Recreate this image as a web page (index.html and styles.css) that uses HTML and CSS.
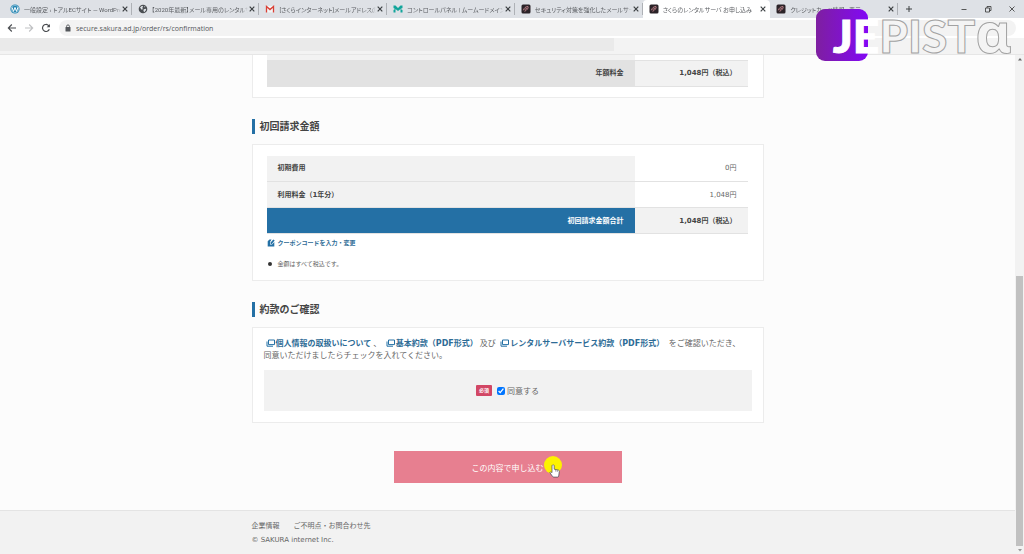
FILE: index.html
```html
<!DOCTYPE html>
<html lang="ja">
  <head>
    <meta charset="utf-8">
    <title>さくらのレンタルサーバ お申し込み</title>
    <link rel="stylesheet" href="styles.css">
  </head>
  <body>
    <svg class="symbols" aria-hidden="true">
      <symbol id="close" viewBox="0 0 8 8">
        <path d="M1.700 1.700l4.600 4.600M6.300 1.700l-4.600 4.600" stroke="#3c4043" stroke-width="1.200" />
      </symbol>
      <symbol id="sakura" viewBox="0 0 10 10">
        <rect x="0.500" y="0.500" width="9" height="9" rx="1.500" fill="#2b2328" />
        <path d="M2.400 6.300C3 4 4.500 2.600 7 2.500 7.800 4 6 6 3.600 7.400M3.500 5.800l2.700-2" fill="none" stroke="#b97f86" stroke-width="1" />
      </symbol>
      <symbol id="window" viewBox="0 0 9 8">
        <path d="M2.500 1h6v4.600h-6z" fill="#fff" stroke="#2470a5" stroke-width="1" />
        <path d="M1 2.500V7.200h6" fill="none" stroke="#2470a5" stroke-width="1" />
      </symbol>
    </svg>

    <header class="browser">
      <div class="tab-bar">
        <nav class="tabs">
          <div class="tab">
            <svg class="favicon" viewBox="0 0 10 10">
              <circle cx="5" cy="5" r="4.600" fill="#2585b2" />
              <circle cx="5" cy="5" r="3.700" fill="none" stroke="#d6eaf3" stroke-width="0.500" />
              <path d="M2 3.400l1.500 4L5 3.400l1.500 4L8 3.200" fill="none" stroke="#fff" stroke-width="1" />
            </svg>
            <span class="tab-title">一般設定 ‹ トアルECサイト — WordPress</span>
            <button class="tab-close" aria-label="閉じる"><svg><use href="#close" /></svg></button>
          </div>
          <div class="tab">
            <svg class="favicon" viewBox="0 0 10 10">
              <circle cx="5" cy="5" r="4.300" fill="#4a4e52" />
              <path d="M2 3.500l2-1.700 1.200.8-1 1.400.8 1-1.300.8zM5.700 5.200l2.200-.5.3 1.300-2 2.200-.8-1.400zM6.400 1.800l1 1-.9.7z" fill="#dee1e6" />
            </svg>
            <span class="tab-title">【2020年最新】メール専用のレンタルサーバー</span>
            <button class="tab-close" aria-label="閉じる"><svg><use href="#close" /></svg></button>
          </div>
          <div class="tab">
            <svg class="favicon" viewBox="0 0 10 10">
              <path d="M1 2h8v6.400H1z" fill="#f4f4f4" />
              <path d="M1.500 8.400V2.500L5 5.600l3.500-3.100v5.900" fill="none" stroke="#d93f35" stroke-width="1.300" />
            </svg>
            <span class="tab-title">[さくらインターネット]メールアドレスの旧</span>
            <button class="tab-close" aria-label="閉じる"><svg><use href="#close" /></svg></button>
          </div>
          <div class="tab">
            <svg class="favicon" viewBox="0 0 10 10">
              <path d="M.5 1.500h2L5 4l2.500-2.500h2v2.500L7.500 5l2 1v2.500h-2V5L5 7 2.500 5v3.500h-2V6l1.500-1-1.500-1z" fill="#12a59b" />
            </svg>
            <span class="tab-title">コントロールパネル | ムームードメイン</span>
            <button class="tab-close" aria-label="閉じる"><svg><use href="#close" /></svg></button>
          </div>
          <div class="tab">
            <svg class="favicon"><use href="#sakura" /></svg>
            <span class="tab-title">セキュリティ対策を強化したメールサーバー</span>
            <button class="tab-close" aria-label="閉じる"><svg><use href="#close" /></svg></button>
          </div>
          <div class="tab active">
            <svg class="favicon"><use href="#sakura" /></svg>
            <span class="tab-title">さくらのレンタルサーバ お申し込み</span>
            <button class="tab-close" aria-label="閉じる"><svg><use href="#close" /></svg></button>
          </div>
          <div class="tab">
            <svg class="favicon"><use href="#sakura" /></svg>
            <span class="tab-title">クレジットカード情報 - 表示</span>
            <button class="tab-close" aria-label="閉じる"><svg><use href="#close" /></svg></button>
          </div>
        </nav>
        <button class="new-tab" aria-label="新しいタブ">
          <svg viewBox="0 0 8 8"><path d="M4 1v6M1 4h6" stroke="#3c4043" stroke-width="1" /></svg>
        </button>
        <div class="window-buttons">
          <button aria-label="最小化"><svg viewBox="0 0 8 8"><path d="M1.500 4.500h5" stroke="#333" stroke-width="0.800" /></svg></button>
          <button aria-label="元に戻す"><svg viewBox="0 0 8 8"><path d="M1.500 3h4v4h-4zM3 3V1.500h4v4H5.500" fill="none" stroke="#333" stroke-width="0.800" /></svg></button>
          <button aria-label="ウィンドウを閉じる"><svg viewBox="0 0 8 8"><path d="M1.500 1.500l5 5M6.500 1.500l-5 5" stroke="#333" stroke-width="0.800" /></svg></button>
        </div>
      </div>

      <div class="toolbar">
        <button aria-label="戻る"><svg viewBox="0 0 10 10"><path d="M9 5H1.500M4.800 1.500L1.300 5l3.500 3.500" fill="none" stroke="#4a4d51" stroke-width="1.100" /></svg></button>
        <button aria-label="進む"><svg viewBox="0 0 10 10"><path d="M1 5h7.500M5.200 1.500L8.700 5 5.200 8.500" fill="none" stroke="#bfc1c3" stroke-width="1.100" /></svg></button>
        <button aria-label="再読み込み"><svg viewBox="0 0 10 10"><path d="M8.300 6.200A3.500 3.500 0 1 1 7.500 2.500L8.500 3.500" fill="none" stroke="#4a4d51" stroke-width="1.200" /><path d="M8.900 1v3.200H5.700z" fill="#4a4d51" /></svg></button>
        <div class="address">
          <svg viewBox="0 0 6 8"><rect x="0.500" y="3" width="5" height="4.500" rx="0.500" fill="#55585c" /><path d="M1.600 3.200V2.300a1.400 1.400 0 0 1 2.800 0v.9" fill="none" stroke="#55585c" stroke-width="0.900" /></svg>
          <input type="text" value="secure.sakura.ad.jp/order/rs/confirmation" aria-label="アドレス">
        </div>
      </div>
      <div class="bookmarks"><div class="bookmarks-items"></div></div>

      <!-- channel logo, sits over the browser frame -->
      <svg class="watermark" viewBox="0 0 200 56" role="img" aria-label="JEPISTA">
        <defs>
          <linearGradient id="purple" x1="0" y1="0" x2="1" y2="0">
            <stop offset="0" stop-color="#7e1fa0" />
            <stop offset="1" stop-color="#8208f5" />
          </linearGradient>
        </defs>
        <rect x="0" y="1" width="52" height="52" rx="9" fill="url(#purple)" />
        <text class="logo-letters" x="17" y="45"><tspan class="solid">JE</tspan>PIST<tspan class="alpha">ɑ</tspan></text>
      </svg>
    </header>

    <div class="viewport">
      <div class="page">
        <main class="content">
          <section class="card card-cut">
            <table class="prices">
              <tr class="sliver">
                <th></th>
                <td></td>
              </tr>
              <tr class="subtotal">
                <th>年額料金</th>
                <td>1,048円（税込）</td>
              </tr>
            </table>
          </section>

          <h2>初回請求金額</h2>
          <section class="card">
            <table class="prices">
              <tr>
                <th>初期費用</th>
                <td>0円</td>
              </tr>
              <tr>
                <th>利用料金（1年分）</th>
                <td>1,048円</td>
              </tr>
              <tr class="total">
                <th>初回請求金額合計</th>
                <td>1,048円（税込）</td>
              </tr>
            </table>
            <a class="coupon" href="#">
              <svg viewBox="0 0 8 8"><path d="M2.500.5h2L3 3v2.500h2L7.300 3v4.500H.7V2.300z" fill="#2470a5" /><path d="M3.600 4.900V3.400L6.300.4l1.400 1.200-2.900 3.300z" fill="#2470a5" /></svg>
              クーポンコードを入力・変更
            </a>
            <ul class="notes">
              <li>金額はすべて税込です。</li>
            </ul>
          </section>

          <h2>約款のご確認</h2>
          <section class="card card-terms">
            <p class="terms">
              <a href="#"><svg><use href="#window" /></svg>個人情報の取扱いについて</a>、
              <a href="#"><svg><use href="#window" /></svg>基本約款（PDF形式）</a>及び
              <a href="#"><svg><use href="#window" /></svg>レンタルサーバサービス約款（PDF形式）</a>
              をご確認いただき、<br>同意いただけましたらチェックを入れてください。
            </p>
            <div class="agree">
              <span class="required">必須</span>
              <input type="checkbox" id="agree" checked>
              <label for="agree">同意する</label>
            </div>
          </section>

          <div class="submit-row">
            <button class="submit" type="submit">この内容で申し込む</button>
            <svg class="pointer" viewBox="0 0 20 24">
              <circle cx="9" cy="9" r="9" fill="#fdf200" />
              <path d="M8.500 9c.9-.5 1.700 0 1.700 1v3.200l4 .8c.9.2 1.200.8 1.100 1.600l-.6 4.400c-.1.700-.5 1.100-1.200 1.100H9.800c-.6 0-1-.2-1.300-.7l-2.700-3.800c.5-.9 1.500-.7 2.200.1V9.900c0-.4.200-.7.500-.9z" fill="#fff" stroke="#445" stroke-width="0.700" />
              <path d="M11.700 13.600v2M13.300 14v2" stroke="#445" stroke-width="0.500" />
            </svg>
          </div>
        </main>

        <footer>
          <div class="footer-inner">
            <nav>
              <a href="#">企業情報</a>
              <a href="#">ご不明点・お問合わせ先</a>
            </nav>
            <small>© SAKURA internet Inc.</small>
          </div>
        </footer>
      </div>

      <div class="scrollbar">
        <svg viewBox="0 0 8 8"><path d="M4 3l2 2.500H2z" fill="#666" /></svg>
        <div class="track"><div class="thumb"></div></div>
        <svg viewBox="0 0 8 8"><path d="M4 5.500L2 3h4z" fill="#999" /></svg>
      </div>
    </div>
  </body>
</html>
```

FILE: styles.css
```css
* {
  box-sizing: border-box;
}

body {
  display: flex;
  flex-direction: column;
  height: 100vh;
  margin: 0;
  overflow: hidden;
  color: #666;
  background-color: #fcfcfc;
  font-family: "DejaVu Sans", "Noto Sans CJK JP", sans-serif;
  font-size: 7px;
}

button {
  margin: 0;
  padding: 0;
  border: 0;
  background: none;
  font-family: inherit;
}

a {
  color: #2e6c96;
  text-decoration: none;
}

.symbols {
  position: absolute;
  width: 0;
  height: 0;
}

/* browser frame */
.browser {
  position: relative;
  flex: none;
}

.tab-bar {
  display: flex;
  align-items: center;
  height: 18px;
  padding-left: 4px;
  background-color: #dee1e6;
}

.tabs {
  display: flex;
  flex: 0 1 894px;
  min-width: 0;
}

.tab {
  display: flex;
  flex: 1;
  align-items: center;
  min-width: 0;
  height: 18px;
  padding: 0 3px 0 6px;
  background: linear-gradient(#aeb1b6, #aeb1b6) right center / 1px 12px no-repeat;
}

.tab.active {
  border-radius: 4px 4px 0 0;
  background: #fff;
}

.favicon {
  flex: none;
  width: 10px;
  height: 10px;
  margin-right: 4px;
}

.tab-title {
  flex: 1;
  overflow: hidden;
  white-space: nowrap;
  color: #5a5d61;
  font-family: Roboto, "Noto Sans CJK JP", sans-serif;
  font-size: 6px;
  font-feature-settings: "palt";
  mask-image: linear-gradient(to left, transparent, #000 6px);
}

.tab-close,
.tab-close svg,
.new-tab svg,
.window-buttons svg {
  display: block;
  width: 8px;
  height: 8px;
}

.new-tab {
  margin-left: 7px;
}

.window-buttons {
  display: flex;
  gap: 16px;
  margin-left: auto;
  padding-right: 8px;
}

.toolbar {
  display: flex;
  align-items: center;
  gap: 7px;
  height: 20px;
  padding: 0 8px 0 7px;
  background-color: #fff;
}

.toolbar button,
.toolbar button svg {
  display: block;
  width: 10px;
  height: 10px;
}

.address {
  display: flex;
  flex: 1;
  align-items: center;
  gap: 5px;
  height: 16px;
  margin-left: 1px;
  padding-left: 6px;
  border-radius: 8px;
  background-color: #f3f3f3;
}

.address svg {
  width: 6px;
  height: 8px;
}

.address input {
  flex: 1;
  padding: 0;
  border: 0;
  outline: 0;
  color: #55585c;
  background: none;
  font-family: "Open Sans", sans-serif;
  font-size: 7px;
}

.bookmarks {
  height: 17px;
  border-bottom: 1px solid #e6e6e6;
  background-color: #f3f3f3;
}

.bookmarks-items {
  width: 60%;
  height: 13px;
  background-color: #eaeaea;
}

.watermark {
  position: absolute;
  top: 8px;
  right: 8px;
  width: 200px;
  height: 56px;
}

.logo-letters {
  fill: #f4f4f4;
  stroke: #a2a2a2;
  stroke-width: 1px;
  font-family: Lato, sans-serif;
  font-size: 46px;
  font-weight: 900;
}

.logo-letters .solid {
  fill: #fff;
  stroke: #fff;
}

.logo-letters .alpha {
  font-family: "Noto Sans", sans-serif;
  font-size: 56px;
  font-weight: bold;
}

/* page */
.viewport {
  display: flex;
  flex: 1;
  min-height: 0;
}

.page {
  display: flex;
  flex: 1;
  flex-direction: column;
  min-width: 0;
}

.content,
.footer-inner {
  width: 100%;
  max-width: 512px;
  margin: 0 auto;
}

h2 {
  margin: 21px 0 10px;
  padding-left: 5px;
  border-left: 3px solid #2470a5;
  color: #444;
  font-size: 10px;
  line-height: 15px;
}

.card {
  padding: 11px 15px 11px 14px;
  border: 1px solid #ececec;
  background-color: #fff;
}

.card-cut {
  padding-top: 0;
  padding-bottom: 10px;
  border-top: 0;
}

.prices {
  width: 100%;
  border-collapse: collapse;
  table-layout: fixed;
  line-height: 10px;
}

.prices th,
.prices td {
  height: 26px;
  padding: 0 11px;
  border-bottom: 1px solid #e2e2e2;
}

.prices th {
  text-align: left;
  color: #444;
  background-color: #f2f2f2;
}

.prices td {
  width: 113px;
  text-align: right;
}

.prices .sliver th,
.prices .sliver td {
  height: 5px;
}

.prices .subtotal th,
.prices .total th {
  text-align: right;
}

.prices .subtotal th {
  background-color: #e2e2e2;
}

.prices .total th {
  color: #fff;
  background-color: #2470a5;
}

.prices .subtotal td,
.prices .total td {
  color: #444;
  background-color: #f2f2f2;
  font-weight: bold;
}

.coupon {
  display: flex;
  align-items: center;
  gap: 3px;
  margin-top: 4px;
  font-size: 6px;
  font-weight: bold;
  line-height: 10px;
}

.coupon svg {
  width: 8px;
  height: 8px;
}

.notes {
  margin: 11px 0 0;
  padding: 0;
  list-style: none;
  font-size: 6px;
  line-height: 10px;
}

.notes li {
  display: flex;
  align-items: center;
  gap: 6px;
}

.notes li::before {
  width: 4px;
  height: 4px;
  margin-left: 1px;
  border-radius: 50%;
  background-color: #333;
  content: "";
}

.card-terms {
  padding: 10px 11px 11px;
}

.terms {
  margin: 0 0 8px;
  font-size: 8px;
  line-height: 12px;
}

.terms a {
  margin: 0 2px;
  font-weight: bold;
}

.terms svg {
  width: 9px;
  height: 8px;
  margin-right: 1px;
  vertical-align: -1px;
}

.agree {
  display: flex;
  align-items: center;
  justify-content: center;
  height: 41px;
  background-color: #f2f2f2;
  font-size: 8px;
}

.agree input {
  width: 8px;
  height: 8px;
  margin: 0 2px 0 5px;
}

.required {
  padding: 0 3px;
  border-radius: 1px;
  color: #fff;
  background-color: #d24765;
  font-size: 5px;
  font-weight: bold;
  line-height: 11px;
}

.submit-row {
  position: relative;
  width: 228px;
  margin: 28px auto 27px;
}

.submit {
  display: block;
  width: 100%;
  height: 32px;
  color: #fff;
  background-color: #e77f90;
  font-size: 8px;
}

.pointer {
  position: absolute;
  top: 5px;
  right: 58px;
  width: 20px;
  height: 24px;
}

footer {
  flex: 1;
  padding-top: 8px;
  border-top: 1px solid #e4e4e4;
  background-color: #f2f2f2;
  line-height: 14px;
}

footer nav {
  display: flex;
  gap: 14px;
}

footer a {
  color: #666;
}

footer small {
  display: block;
  font-size: 7px;
}

.scrollbar {
  display: flex;
  flex-direction: column;
  align-items: center;
  width: 9px;
  background-color: #f2f2f2;
}

.scrollbar svg {
  width: 8px;
  height: 8px;
}

.track {
  display: flex;
  flex: 1;
  align-items: flex-end;
}

.thumb {
  width: 7px;
  height: 56%;
  background-color: #c1c1c1;
}
```
